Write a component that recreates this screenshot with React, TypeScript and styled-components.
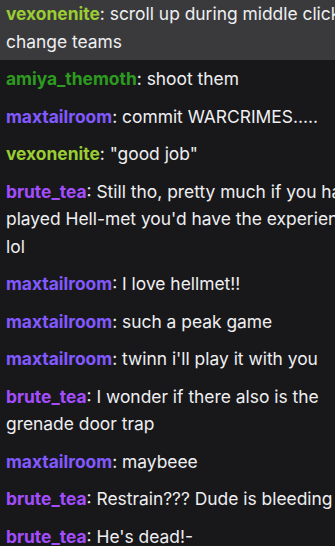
import React, { FC } from 'react';
import styled, { createGlobalStyle } from 'styled-components';

const GlobalStyle = createGlobalStyle`
    html, body {
        margin: 0;
        padding: 0;
        background: #18181b;
        overflow: hidden;
    }
`;

const Viewport = styled.div`
    width: 335px;
    height: 546px;
    overflow: hidden;
    background: #18181b;
`;

const ChatList = styled.div`
    width: 376px;
    margin-top: -5px;
    display: flex;
    flex-direction: column;
    font-family: Inter, 'Noto Sans', sans-serif;
    font-size: 17.4px;
    line-height: 27.5px;
    color: #efeff1;
`;

const Line = styled.div<{ highlighted?: boolean }>`
    flex-shrink: 0;
    padding: 5px 6px;
    background: ${props => (props.highlighted ? '#3a3a3d' : 'transparent')};
    word-wrap: break-word;
`;

const Author = styled.span<{ color: string }>`
    font-weight: 700;
    color: ${props => props.color};
`;

const COLORS: Record<string, string> = {
    vexonenite: '#9acd32',
    amiya_themoth: '#2d9b1f',
    maxtailroom: '#8259ff',
    brute_tea: '#a34dff',
};

type Message = { author: string; text: string; highlighted?: boolean };

const messages: Message[] = [
    { author: 'vexonenite', text: 'scroll up during middle click to change teams', highlighted: true },
    { author: 'amiya_themoth', text: 'shoot them' },
    { author: 'maxtailroom', text: 'commit WARCRIMES.....' },
    { author: 'vexonenite', text: '"good job"' },
    {
        author: 'brute_tea',
        text: "Still tho, pretty much if you have played Hell-met you'd have the experience lol",
    },
    { author: 'maxtailroom', text: 'I love hellmet!!' },
    { author: 'maxtailroom', text: 'such a peak game' },
    { author: 'maxtailroom', text: "twinn i'll play it with you" },
    { author: 'brute_tea', text: 'I wonder if there also is the grenade door trap' },
    { author: 'maxtailroom', text: 'maybeee' },
    { author: 'brute_tea', text: 'Restrain??? Dude is bleeding out' },
    { author: 'brute_tea', text: "He's dead!-" },
];

const ChatLine: FC<{ message: Message }> = ({ message }) => (
    <Line highlighted={message.highlighted}>
        <Author color={COLORS[message.author]}>{message.author}</Author>
        <span>: {message.text}</span>
    </Line>
);

export default function App() {
    return (
        <>
            <GlobalStyle />
            <Viewport>
                <ChatList>
                    {messages.map((m, i) => (
                        <ChatLine key={i} message={m} />
                    ))}
                </ChatList>
            </Viewport>
        </>
    );
}
